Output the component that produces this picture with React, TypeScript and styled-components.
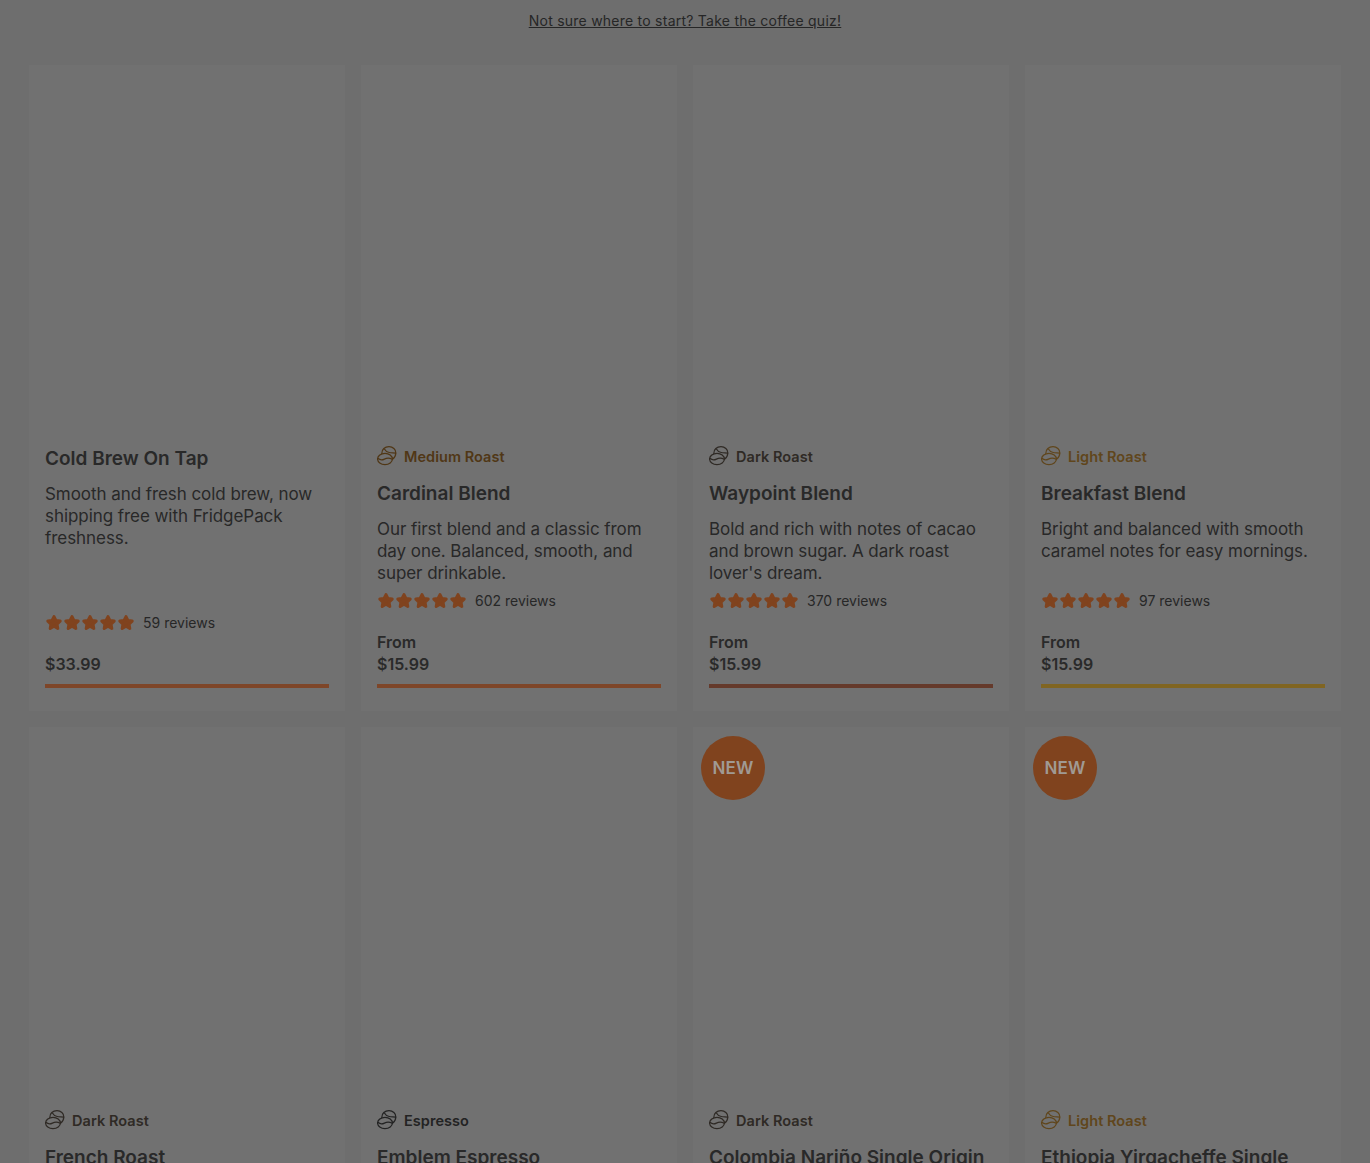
import React from 'react';
import styled, { createGlobalStyle } from 'styled-components';

type Roast = 'Medium Roast' | 'Dark Roast' | 'Light Roast' | 'Espresso';

interface Product {
  title: string;
  description?: string;
  roast?: Roast;
  reviews?: number;
  from?: boolean;
  price?: string;
  bar?: string;
  isNew?: boolean;
  mediaHeight: number;
}

const roastColors: Record<Roast, string> = {
  'Medium Roast': '#503716',
  'Dark Roast': '#2f2a25',
  'Light Roast': '#60461c',
  Espresso: '#232323',
};

const products: Product[] = [
  {
    title: 'Cold Brew On Tap',
    description: 'Smooth and fresh cold brew, now shipping free with FridgePack freshness.',
    reviews: 59,
    price: '$33.99',
    bar: '#7e4629',
    mediaHeight: 382,
  },
  {
    title: 'Cardinal Blend',
    roast: 'Medium Roast',
    description: 'Our first blend and a classic from day one. Balanced, smooth, and super drinkable.',
    reviews: 602,
    from: true,
    price: '$15.99',
    bar: '#7e4629',
    mediaHeight: 379,
  },
  {
    title: 'Waypoint Blend',
    roast: 'Dark Roast',
    description: "Bold and rich with notes of cacao and brown sugar. A dark roast lover's dream.",
    reviews: 370,
    from: true,
    price: '$15.99',
    bar: '#653a2b',
    mediaHeight: 379,
  },
  {
    title: 'Breakfast Blend',
    roast: 'Light Roast',
    description: 'Bright and balanced with smooth caramel notes for easy mornings.',
    reviews: 97,
    from: true,
    price: '$15.99',
    bar: '#806522',
    mediaHeight: 379,
  },
  { title: 'French Roast', roast: 'Dark Roast', mediaHeight: 381 },
  { title: 'Emblem Espresso', roast: 'Espresso', mediaHeight: 381 },
  { title: 'Colombia Nariño Single Origin', roast: 'Dark Roast', isNew: true, mediaHeight: 381 },
  { title: 'Ethiopia Yirgacheffe Single', roast: 'Light Roast', isNew: true, mediaHeight: 381 },
];

const GlobalStyle = createGlobalStyle`
  html, body {
    margin: 0;
    padding: 0;
    background: #6e6e6e;
  }
  body {
    font-family: Inter, "Open Sans", sans-serif;
    color: #2a2a2a;
  }
`;

const Page = styled.main`
  height: 1163px;
  overflow: hidden;
  padding: 10px 29px 0;
  box-sizing: border-box;
`;

const QuizRow = styled.div`
  height: 55px;
  text-align: center;
`;

const QuizLink = styled.a`
  font-size: 14px;
  line-height: 18px;
  letter-spacing: 0.24px;
  color: #262626;
  text-decoration: underline;
`;

const Grid = styled.div`
  display: grid;
  grid-template-columns: repeat(4, 316px);
  grid-auto-rows: 646px;
  gap: 16px;
`;

const Card = styled.article`
  position: relative;
  display: flex;
  flex-direction: column;
  background: #717171;
  padding: 0 16px 23px;
  box-sizing: border-box;
`;

const Media = styled.div<{ $height: number }>`
  flex: none;
  height: ${(p) => p.$height}px;
`;

const NewBadge = styled.span`
  position: absolute;
  top: 9px;
  left: 8px;
  width: 64px;
  height: 64px;
  border-radius: 50%;
  background: #80431e;
  color: #a09a94;
  display: flex;
  align-items: center;
  justify-content: center;
  font-size: 17px;
  font-weight: 600;
  letter-spacing: 0.2px;
`;

const RoastRow = styled.div<{ $color: string }>`
  display: flex;
  align-items: center;
  gap: 7px;
  height: 24px;
  margin-bottom: 14px;
  color: ${(p) => p.$color};
  font-size: 14.5px;
  font-weight: 600;
  letter-spacing: 0.05px;
`;

const Title = styled.h3`
  margin: 0 0 13px;
  font-size: 19px;
  line-height: 23px;
  font-weight: 600;
  color: #292929;
`;

const Description = styled.p`
  margin: 0 0 -1px;
  min-height: 66px;
  font-size: 17px;
  line-height: 22px;
  letter-spacing: -0.06px;
  color: #282828;
`;

const Bottom = styled.div`
  margin-top: auto;
`;

const Rating = styled.div`
  display: flex;
  align-items: center;
  height: 20px;
  margin-bottom: 21px;
`;

const Stars = styled.div`
  display: flex;
  width: 98px;
`;

const Reviews = styled.span`
  font-size: 14px;
  color: #272727;
`;

const PriceLine = styled.div`
  font-size: 16px;
  line-height: 22px;
  font-weight: 600;
  color: #2a2a2a;
`;

const Bar = styled.div<{ $color: string }>`
  height: 4px;
  margin-top: 9px;
  background: ${(p) => p.$color};
`;

const BeanIcon = ({ color }: { color: string }) => (
  <svg width="20" height="20" viewBox="0 0 20 20" fill="none" stroke={color} strokeWidth="1.25" strokeLinecap="round" strokeLinejoin="round">
    <path d="M4.8 7.6C4.6 3.4 8 .7 12 .7c3.9 0 6.9 2.6 6.8 6.2-.1 2.7-1.2 4.8-2.9 6" />
    <path d="M7.6 3.2c1 1.9 2.6 3 4.6 3.3 2.2.4 4.6.3 6.4.6" />
    <ellipse cx="8" cy="13" rx="7.4" ry="5.7" fill="#717171" />
    <path d="M1.2 12.6c2 1.7 4 1.6 6.2.5 2.2-1.1 4.8-1.5 7.8.2" />
  </svg>
);

const Star = () => (
  <svg width="18" height="18" viewBox="0 0 18 18" fill="#80431e" stroke="#80431e" strokeWidth="3" strokeLinejoin="round">
    <path d="M9 3.6l1.9 3.9 4.3.6-3.2 3 .8 4.3L9 13.3l-3.8 2.1.8-4.3-3.2-3 4.3-.6z" />
  </svg>
);

const ProductCard = ({ product }: { product: Product }) => (
  <Card>
    {product.isNew && <NewBadge>NEW</NewBadge>}
    <Media $height={product.mediaHeight} />
    {product.roast && (
      <RoastRow $color={roastColors[product.roast]}>
        <BeanIcon color={roastColors[product.roast]} />
        {product.roast}
      </RoastRow>
    )}
    <Title>{product.title}</Title>
    {product.description && <Description>{product.description}</Description>}
    {product.price && (
      <Bottom>
        <Rating>
          <Stars>
            {[0, 1, 2, 3, 4].map((i) => (
              <Star key={i} />
            ))}
          </Stars>
          <Reviews>{product.reviews} reviews</Reviews>
        </Rating>
        {product.from && <PriceLine>From</PriceLine>}
        <PriceLine>{product.price}</PriceLine>
        {product.bar && <Bar $color={product.bar} />}
      </Bottom>
    )}
  </Card>
);

export default function App() {
  return (
    <>
      <GlobalStyle />
      <Page>
        <QuizRow>
          <QuizLink href="#quiz">Not sure where to start? Take the coffee quiz!</QuizLink>
        </QuizRow>
        <Grid>
          {products.map((p) => (
            <ProductCard key={p.title} product={p} />
          ))}
        </Grid>
      </Page>
    </>
  );
}
